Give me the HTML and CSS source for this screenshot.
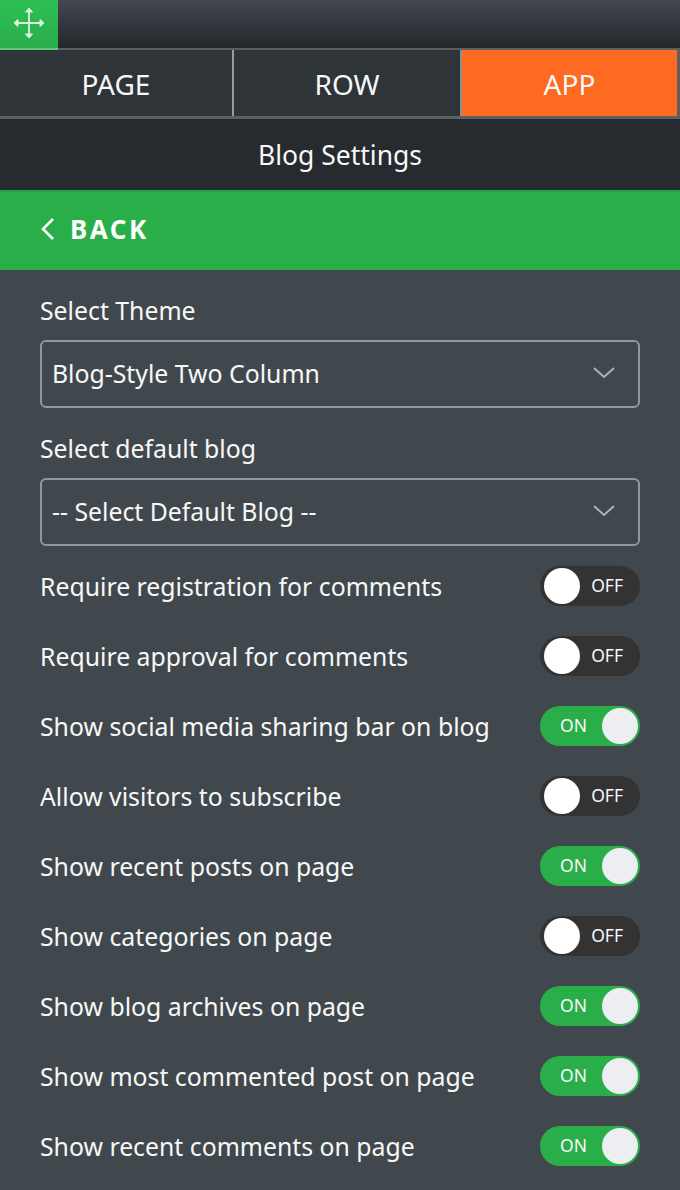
FILE: index.html
```html
<!DOCTYPE html>
<html lang="en">
<head>
    <meta charset="UTF-8">
    <meta name="viewport" content="width=device-width, initial-scale=1.0">
    <title>Blog Settings</title>
    <link rel="stylesheet" href="styles.css">
</head>
<body>
    <div class="topbar">
        <div class="drag">
            <svg width="32" height="34" viewBox="0 0 32 34" fill="#d9f3df" stroke="#d9f3df" stroke-width="1.8">
                <path d="M16 3V31M2 17H30"/>
                <path stroke-width="1" d="M12.5 6L16 2L19.5 6ZM12.5 28L16 32L19.5 28ZM5 13.5L1 17L5 20.5ZM27 13.5L31 17L27 20.5Z"/>
            </svg>
        </div>
    </div>
    <nav class="tabs">
        <a class="tab">PAGE</a>
        <a class="tab">ROW</a>
        <a class="tab active">APP</a>
    </nav>
    <div class="title">Blog Settings</div>
    <a class="back">
        <svg width="16" height="24" viewBox="0 0 16 24" fill="none" stroke="#fff" stroke-width="2.6">
            <path d="M13 2L3 12L13 22"/>
        </svg>
        <span>BACK</span>
    </a>
    <div class="panel">
        <label class="field-label">Select Theme</label>
        <div class="select">
            <span>Blog-Style Two Column</span>
            <svg width="24" height="14" viewBox="0 0 24 14" fill="none" stroke="#aeb2b6" stroke-width="2">
                <path d="M2 2L12 11L22 2"/>
            </svg>
        </div>
        <label class="field-label">Select default blog</label>
        <div class="select select-last">
            <span>-- Select Default Blog --</span>
            <svg width="24" height="14" viewBox="0 0 24 14" fill="none" stroke="#aeb2b6" stroke-width="2">
                <path d="M2 2L12 11L22 2"/>
            </svg>
        </div>
        <div class="row"><span>Require registration for comments</span><div class="toggle"><i class="knob"></i><b>OFF</b></div></div>
        <div class="row"><span>Require approval for comments</span><div class="toggle"><i class="knob"></i><b>OFF</b></div></div>
        <div class="row"><span>Show social media sharing bar on blog</span><div class="toggle on"><b>ON</b><i class="knob"></i></div></div>
        <div class="row"><span>Allow visitors to subscribe</span><div class="toggle"><i class="knob"></i><b>OFF</b></div></div>
        <div class="row"><span>Show recent posts on page</span><div class="toggle on"><b>ON</b><i class="knob"></i></div></div>
        <div class="row"><span>Show categories on page</span><div class="toggle"><i class="knob"></i><b>OFF</b></div></div>
        <div class="row"><span>Show blog archives on page</span><div class="toggle on"><b>ON</b><i class="knob"></i></div></div>
        <div class="row"><span>Show most commented post on page</span><div class="toggle on"><b>ON</b><i class="knob"></i></div></div>
        <div class="row"><span>Show recent comments on page</span><div class="toggle on"><b>ON</b><i class="knob"></i></div></div>
    </div>
</body>
</html>
```

FILE: styles.css
```css
body {
    font-family: "Noto Sans", "Open Sans", sans-serif;
    background-color: #41484d;
    color: #f7f8f8;
    margin: 0;
    height: 1190px;
    overflow: hidden;
}
.topbar {
    height: 48px;
    background: linear-gradient(#434750, #24272a);
}
.drag {
    width: 58px;
    height: 50px;
    background: linear-gradient(#2dc053, #2aae4b);
    border-bottom: 2px solid #5fc87b;
    display: flex;
    align-items: flex-start;
    justify-content: center;
    padding-top: 6px;
    box-sizing: border-box;
    position: relative;
    z-index: 1;
}
.tabs {
    display: flex;
    height: 71px;
    box-sizing: border-box;
    background-color: #2f3438;
    border-top: 2px solid #5b5f63;
    border-bottom: 3px solid #5b5f63;
    border-right: 3px solid #5b5f63;
}
.tab {
    font-size: 28px;
    display: flex;
    align-items: center;
    justify-content: center;
    box-sizing: border-box;
    padding-top: 1px;
}
.tab:nth-child(1) { width: 234px; border-right: 2px solid #999c9f; }
.tab:nth-child(2) { width: 228px; border-right: 2px solid #8a9195; }
.tab.active { flex: 1; background-color: #ff6a22; }
.title {
    height: 71px;
    background-color: #272a2e;
    font-size: 26.5px;
    display: flex;
    align-items: center;
    justify-content: center;
}
.back {
    height: 80px;
    box-sizing: border-box;
    background-color: #2aae4a;
    border-top: 2px solid #26a044;
    color: #fff;
    display: flex;
    align-items: center;
    gap: 14px;
    padding-left: 40px;
    padding-bottom: 4px;
    font-size: 26px;
    font-weight: 700;
    letter-spacing: 2.5px;
}
.panel {
    padding: 21px 40px 0;
    font-size: 24.8px;
}
.field-label {
    display: block;
    height: 49px;
    line-height: 39px;
}
.select {
    height: 68px;
    box-sizing: border-box;
    border: 2px solid #94979a;
    border-radius: 6px;
    display: flex;
    align-items: center;
    justify-content: space-between;
    padding: 0 22px 2px 10px;
    margin-bottom: 21px;
}
.select-last { margin-bottom: 5px; }
.row {
    height: 70px;
    display: flex;
    align-items: center;
    justify-content: space-between;
}
.toggle {
    width: 100px;
    height: 40px;
    box-sizing: border-box;
    border-radius: 20px;
    background-color: #333;
    display: flex;
    align-items: center;
    justify-content: space-between;
    padding: 0 2px 0 4px;
}
.toggle b {
    font-size: 17.5px;
    font-weight: 400;
    margin-right: 15px;
    padding-bottom: 2px;
}
.toggle.on {
    background-color: #2aae4a;
    padding: 0 2px 0 20px;
}
.toggle.on b { margin-right: 0; }
.knob {
    width: 36px;
    height: 36px;
    border-radius: 50%;
    background-color: #fff;
}
.toggle.on .knob { background-color: #eceef2; }
```
